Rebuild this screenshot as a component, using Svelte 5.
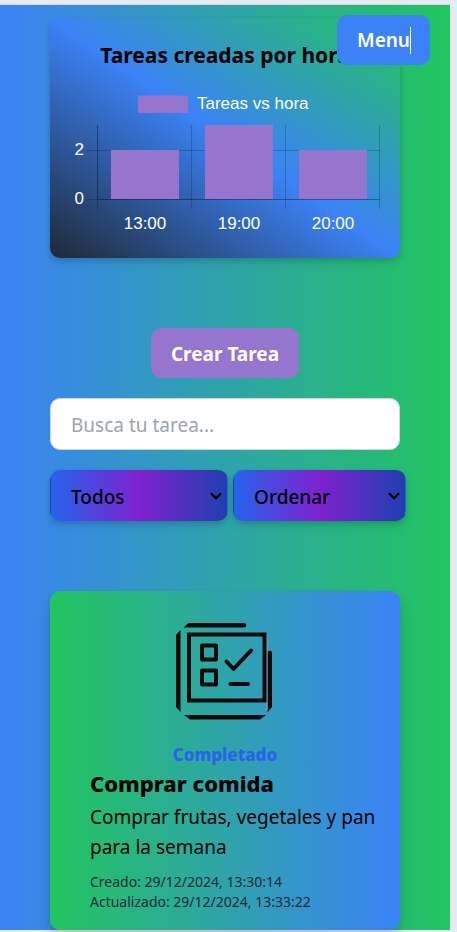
<script>
  const bars = [
    { hour: '13:00', count: 2 },
    { hour: '19:00', count: 3 },
    { hour: '20:00', count: 2 }
  ];
  const left = 28;
  const base = 116;
  const step = 94;
  const barWidth = 68;
  const heightOf = (count) => (count === 3 ? 74 : count * 24.5);

  let search = $state('');
  let status = $state('Todos');
  let order = $state('Ordenar');
</script>

{#snippet chevron()}
  <svg class="chevron" width="12" height="8" viewBox="0 0 12 8" aria-hidden="true">
    <path d="M1 1.2 L6 6.2 L11 1.2" fill="none" stroke="#000" stroke-width="2.2" />
  </svg>
{/snippet}

<div class="frame">
  <div class="page">
    <button class="menu" type="button">Menu<span class="caret"></span></button>

    <main>
      <section class="chart-card">
        <h2>Tareas creadas por hora</h2>
        <svg class="chart" viewBox="0 0 310 155" role="img" aria-label="Tareas vs hora">
          <rect x="68" y="12.5" width="50" height="17.5" fill="#9575cd" />
          <text x="127" y="26">Tareas vs hora</text>
          <g stroke="#000" stroke-opacity="0.2">
            <path d="M17 67.5H309.5" />
            <path d="M17 116.5H309.5" />
            <path d="M27.5 116.5H309.5" />
            <path d="M27.5 42V126" />
            <path d="M27.5 42V116" />
            <path d="M121.5 42V126" />
            <path d="M215.5 42V126" />
            <path d="M309.5 42V126" />
          </g>
          <text x="14" y="72" text-anchor="end">2</text>
          <text x="14" y="121" text-anchor="end">0</text>
          {#each bars as bar, i}
            <rect
              x={left + i * step + 13}
              y={base - heightOf(bar.count)}
              width={barWidth}
              height={heightOf(bar.count)}
              fill="#9575cd"
            />
            <text x={left + i * step + 47} y="146" text-anchor="middle">{bar.hour}</text>
          {/each}
        </svg>
      </section>

      <button class="create" type="button">Crear Tarea</button>

      <input class="search" type="text" placeholder="Busca tu tarea..." aria-label="Busca tu tarea" bind:value={search} />

      <div class="filters">
        <div class="filter status">
          <select aria-label="Estado" bind:value={status}>
            <option>Todos</option>
            <option>Completado</option>
            <option>Pendiente</option>
          </select>
          {@render chevron()}
        </div>
        <div class="filter order">
          <select aria-label="Orden" bind:value={order}>
            <option>Ordenar</option>
            <option>Recientes</option>
            <option>Antiguas</option>
          </select>
          {@render chevron()}
        </div>
      </div>

      <article class="task">
        <svg class="task-icon" width="120" height="120" viewBox="-5 0 120 120" aria-hidden="true">
          <g fill="#0a0a0a">
            <path d="M13.5 16.5 L18.5 12 H74 A2.2 2.2 0 0 1 74 16.5 Z" />
            <path d="M6 24 L10.500 19 V101 L6 96 Z" />
            <path d="M14 104 H96 L90 108.500 H20 Z" />
            <path d="M97.500 42 A2.200 2.200 0 0 1 102 42 V96 L97.500 101 Z" />
          </g>
          <path d="M97 25V99" stroke="#9aa0a0" stroke-width="1" />
          <g fill="none" stroke="#0a0a0a" stroke-width="4">
            <rect x="19" y="23.500" width="75.500" height="66" />
            <g stroke-linejoin="round">
              <rect x="32" y="34.500" width="14" height="14" />
              <rect x="32" y="59.500" width="14" height="14" />
            </g>
            <path d="M56.500 50.500 L63.500 58 L81 39.500" stroke-linecap="round" stroke-linejoin="round" />
            <path d="M60.500 73H78" stroke-linecap="round" />
          </g>
        </svg>
        <p class="state">Completado</p>
        <h3>Comprar comida</h3>
        <p class="description">Comprar frutas, vegetales y pan para la semana</p>
        <p class="date">Creado: 29/12/2024, 13:30:14</p>
        <p class="date">Actualizado: 29/12/2024, 13:33:22</p>
      </article>
    </main>
  </div>
</div>

<style>
  :global(body) {
    margin: 0;
    background: #e6ebf3;
  }

  * {
    box-sizing: border-box;
  }

  .frame {
    padding: 4px 7px 2px 0;
    font-family: 'Noto Sans', 'Open Sans', sans-serif;
    font-size: 19px;
    line-height: 30px;
    color: #000;
  }

  .page {
    position: relative;
    border-top: 1px solid #d5dade;
    background: linear-gradient(to right, #3b82f6, #22c55e);
  }

  main {
    display: flex;
    flex-direction: column;
    padding: 13px 50px 0;
  }

  h2,
  h3,
  p {
    margin: 0;
  }

  button,
  input,
  select {
    font: inherit;
    border-radius: 10px;
  }

  .menu {
    position: absolute;
    z-index: 1;
    top: 10px;
    right: 20px;
    display: flex;
    align-items: center;
    height: 50px;
    padding: 0 19px 0 20px;
    border: 0;
    background: #3b82f6;
    color: #fff;
    font-weight: 600;
  }

  .caret {
    width: 1px;
    height: 27px;
    background: #fff;
  }

  .chart-card {
    padding: 20px;
    border-radius: 10px;
    background: linear-gradient(to top right, #1f2937, #3b82f6, #22c55e);
    box-shadow: 0 5px 8px rgba(0, 0, 0, 0.1), 0 2px 5px rgba(0, 0, 0, 0.1);
  }

  h2 {
    margin-bottom: 10px;
    font-size: 21px;
    line-height: 35px;
    font-weight: 700;
    text-align: center;
    white-space: nowrap;
  }

  .chart {
    display: block;
    width: 100%;
    font-family: 'Liberation Sans', Arial, sans-serif;
    font-size: 17px;
    fill: #fff;
  }

  .create {
    align-self: center;
    height: 50px;
    margin-top: 70px;
    padding: 2px 20px 0;
    border: 0;
    background: #9575cd;
    color: #fff;
    font-weight: 700;
  }

  .search {
    width: 100%;
    height: 52px;
    margin-top: 20px;
    padding: 2px 20px 0;
    border: 1px solid #d1d5db;
    background: #fff;
  }

  .search::placeholder {
    color: #9ca3af;
    opacity: 1;
  }

  .filters {
    display: flex;
    gap: 5px;
    margin: 20px -6px 0 0;
  }

  .filter {
    position: relative;
    flex: 1;
  }

  .filter.status {
    flex-grow: 1.03;
  }

  select {
    display: block;
    appearance: none;
    width: 100%;
    height: 51px;
    padding: 2px 20px 0;
    border: 1px solid transparent;
    background: linear-gradient(to right, #2563eb, #7e22ce, #1e40af);
    box-shadow: 0 5px 8px rgba(0, 0, 0, 0.1), 0 2px 5px rgba(0, 0, 0, 0.1);
    color: #000;
    font-weight: 500;
  }

  .chevron {
    position: absolute;
    top: 22px;
    right: 6px;
    pointer-events: none;
  }

  .task {
    display: flex;
    flex-direction: column;
    margin-top: 70px;
    padding: 20px 20px 18px 40px;
    border-radius: 10px;
    background: linear-gradient(to right, #22c55e, #3b82f6);
    box-shadow: 0 10px 15px rgba(0, 0, 0, 0.1), 0 4px 6px rgba(0, 0, 0, 0.1);
  }

  .task-icon {
    align-self: center;
    margin: 0 20px 10px 0;
  }

  .state {
    margin-right: 20px;
    font-size: 17px;
    line-height: 27px;
    font-weight: 800;
    text-align: center;
    color: #2563eb;
  }

  h3 {
    font-size: 22px;
    line-height: 30px;
    font-weight: 800;
  }

  .description {
    margin: 4px 0 10px;
  }

  .date {
    font-size: 14px;
    line-height: 20px;
    color: #1f2937;
  }
</style>
